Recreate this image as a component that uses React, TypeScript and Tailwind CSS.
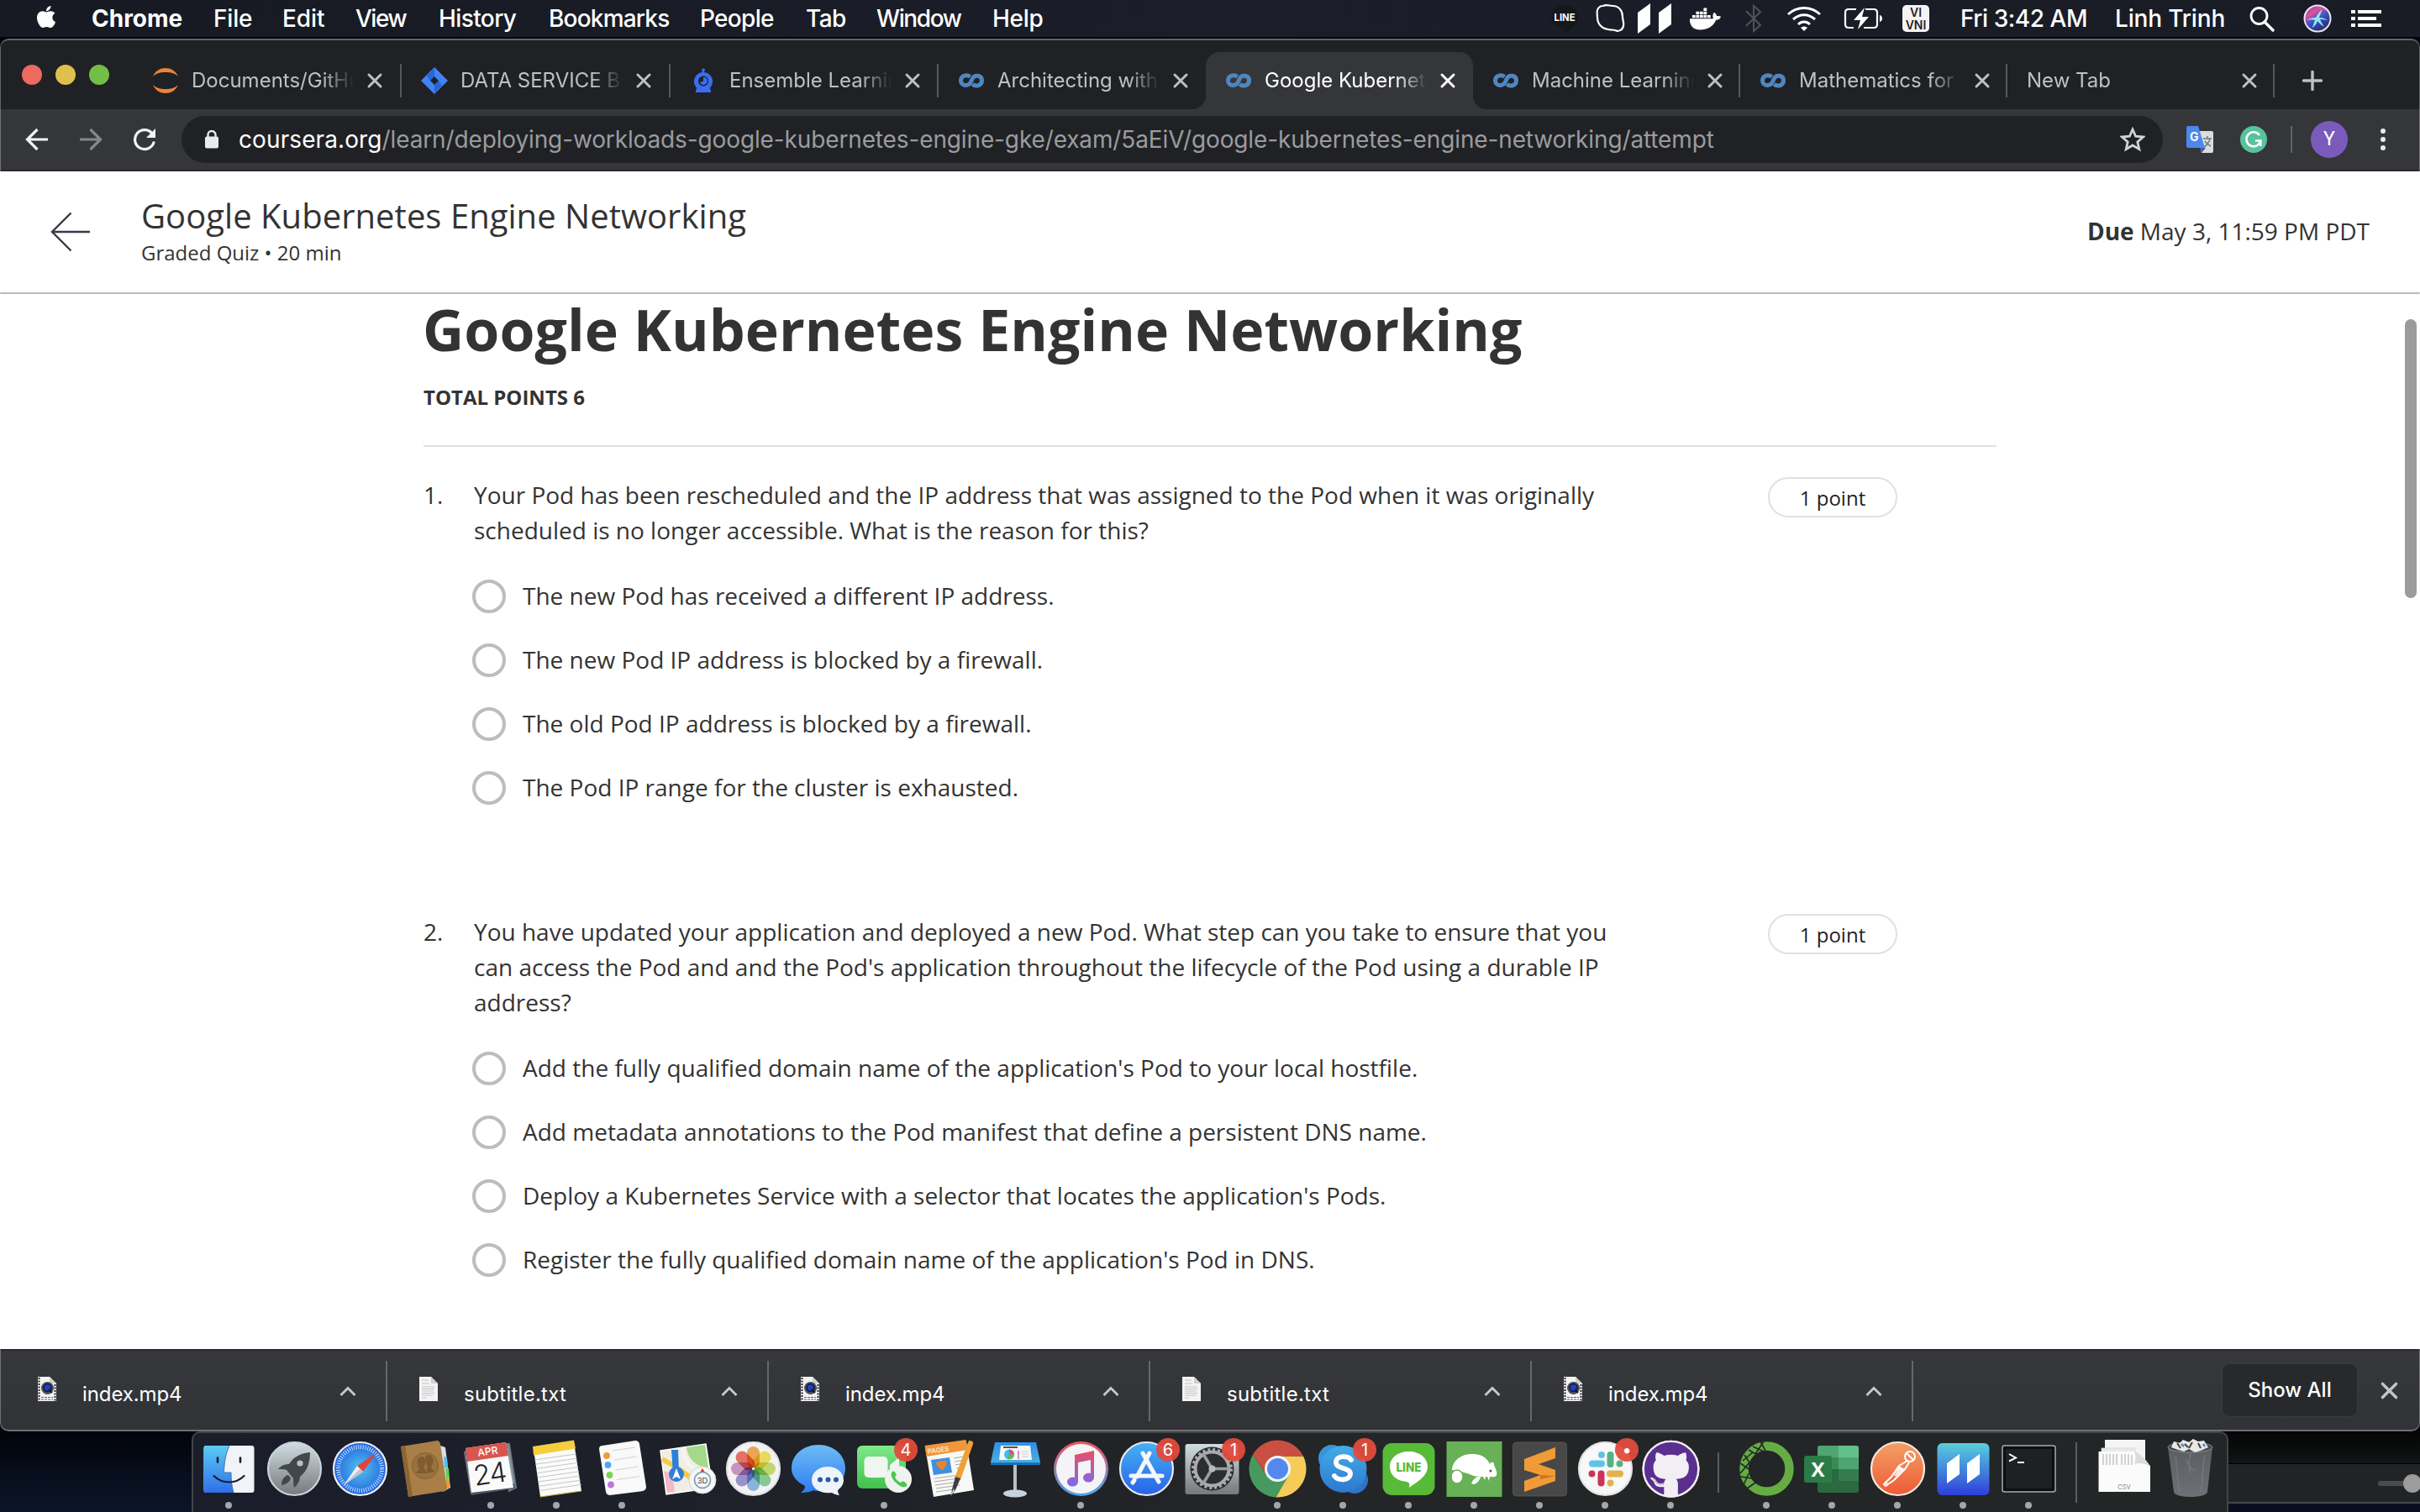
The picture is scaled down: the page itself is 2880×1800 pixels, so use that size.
import React from "react";
import { FaApple, FaDocker, FaGithub } from "react-icons/fa";

/* ---------- Menu bar ---------- */

const MENUS = [
  { label: "File", cls: "w-[82px] tracking-[-0.2px]" },
  { label: "Edit", cls: "w-[87px] tracking-[-0.1px]" },
  { label: "View", cls: "w-[99px] tracking-[-1.5px]" },
  { label: "History", cls: "w-[131px] tracking-[-0.6px]" },
  { label: "Bookmarks", cls: "w-[180px] tracking-[-0.8px]" },
  { label: "People", cls: "w-[126px] tracking-[-0.7px]" },
  { label: "Tab", cls: "w-[84px] tracking-[-0.6px]" },
  { label: "Window", cls: "w-[138px] tracking-[-1.4px]" },
  { label: "Help", cls: "tracking-[-0.3px]" },
];

function MenuBar() {
  return (
    <div className="flex h-[44px] shrink-0 items-center bg-linear-to-r from-[#171a22] via-[#1b1d29] to-[#191c24] text-[28px] font-medium leading-[44px] text-white">
      <FaApple className="-mt-[4px] ml-[40px] size-[30px]" />
      <div className="ml-[39px] w-[145px] font-bold">Chrome</div>
      {MENUS.map((m) => (
        <div key={m.label} className={m.cls}>
          {m.label}
        </div>
      ))}
      <div className="ml-auto flex h-full items-center">
        <svg className="h-[40px] w-[36px]" viewBox="0 0 36 40">
          <path d="M18 4c9 0 16 6 16 14 0 9-9 16-16 21 1-5-1-7-4-8C6 29 2 24 2 18 2 10 9 4 18 4z" fill="#161718" />
          <text x="18" y="22.500" textAnchor="middle" fontSize="12" fontWeight="700" fill="#fff" fontFamily="Inter" textLength="25" lengthAdjust="spacingAndGlyphs">
            LINE
          </text>
        </svg>
        <svg className="ml-[18px] h-[36px] w-[36px]" viewBox="0 0 36 36" fill="none" stroke="#fff" strokeWidth="2.2">
          <path d="M10 3c4-2 7 0 11 0 8 0 12 6 12 13 0 4 2 7 1 11-1 5-6 7-10 5-3-1-5 0-8-1C8 30 3 24 3 17c0-3-1-6 0-9 1-3 4-5 7-5z" />
        </svg>
        <svg className="ml-[15px] h-[38px] w-[40px]" viewBox="0 0 40 38" fill="#fff">
          <path d="M0 12 15 1v25L0 37zM25 12 40 1v25L25 37z" />
        </svg>
        <FaDocker className="ml-[22px] size-[37px]" />
        <svg className="ml-[29px] h-[36px] w-[20px]" viewBox="0 0 20 36" fill="none" stroke="#4f5259" strokeWidth="2">
          <path d="M1 9 18 26 10 33V3l8 7L1 27" />
        </svg>
        <svg className="ml-[29px] h-[32px] w-[42px]" viewBox="0 0 42 32" fill="none" stroke="#fff" strokeWidth="3">
          <path d="M2 11C13 1 29 1 40 11M8 17c8-7 18-7 26 0M14 23c4-4 10-4 14 0" />
          <path d="M17 27c3-2 5-2 8 0l-4 4z" fill="#fff" stroke="none" />
        </svg>
        <svg className="ml-[26px] h-[28px] w-[48px]" viewBox="0 0 48 28" fill="none" stroke="#fff" strokeWidth="2.2">
          <path d="M15 3H6c-3 0-4 1-4 4v14c0 3 1 4 4 4h6M26 3h10c3 0 4 1 4 4v14c0 3-1 4-4 4H24" />
          <path d="M25 1 12 16h8l-3 11 13-15h-8z" fill="#fff" stroke="none" />
          <path d="M43 10c4 1 4 7 0 8z" fill="#fff" stroke="none" />
        </svg>
        <div className="ml-[22px] flex h-[32px] w-[32px] flex-col items-center justify-center rounded-[5px] bg-[#f4f4f4] text-[14px] font-semibold leading-[15px] text-[#22242c]">
          <span>VI</span>
          <span>VNI</span>
        </div>
        <div className="ml-[37px] w-[154px] whitespace-nowrap tracking-[-0.45px]">Fri 3:42 AM</div>
        <div className="ml-[30px] w-[134px] whitespace-nowrap tracking-[-0.15px]">Linh Trinh</div>
        <svg className="ml-[26px] h-[32px] w-[30px]" viewBox="0 0 30 32" fill="none" stroke="#fff" strokeWidth="2.8">
          <circle cx="11.500" cy="13" r="9.500" />
          <path d="m18 20 10 10" strokeWidth="3.400" strokeLinecap="round" />
        </svg>
        <svg className="ml-[34px] size-[34px]" viewBox="0 0 34 34">
          <defs>
            <linearGradient id="siri" x1="0" y1="0" x2="0.600" y2="1">
              <stop offset="0" stopColor="#6a4bb0" />
              <stop offset="0.350" stopColor="#e0519c" />
              <stop offset="0.600" stopColor="#3a55c8" />
              <stop offset="1" stopColor="#2b2c6c" />
            </linearGradient>
          </defs>
          <circle cx="17" cy="17" r="15.500" fill="url(#siri)" stroke="#e6e6ee" strokeWidth="2" />
          <path d="M4 19c5-3 8-3 11-3 2-4 4-7 8-10-2 4-3 7-4 10 4 0 7 1 10 3-4-1-7-1-9-1 1 3 3 6 5 9-4-2-6-5-8-7-1 3-3 6-6 8 1-4 2-6 3-9-3-1-6-1-10 0z" fill="#8fe6f2" />
        </svg>
        <svg className="ml-[23px] mr-[46px] h-[24px] w-[36px]" viewBox="0 0 36 24" fill="#fff">
          <path d="M0 2h5v4H0zM8 2h28v4H8zM0 10h5v4H0zM8 10h22v4H8zM0 18h5v4H0zM8 18h28v4H8z" />
        </svg>
      </div>
    </div>
  );
}

/* ---------- Browser chrome ---------- */

function JupyterIcon() {
  return (
    <svg viewBox="0 0 32 32" className="size-[32px]" fill="#e8833a">
      <path d="M1 11C4 4 10 1 16 1s12 3 15 10C27 7 22 6 16 6S5 7 1 11zM1 21c3 7 9 10 15 10s12-3 15-10c-4 4-9 5-15 5S5 25 1 21z" />
    </svg>
  );
}

function JiraIcon() {
  return (
    <svg viewBox="0 0 32 32" className="size-[32px]">
      <path d="M16 0 32 16 16 32 0 16z" fill="#3f84f6" />
      <path d="M16 1v10l-5 5-4-6zM16 31V21l5-5 4 6z" fill="#2864d6" />
      <path d="m16 11 5 5-5 5-5-5z" fill="#202124" />
    </svg>
  );
}

function RobotIcon() {
  return (
    <svg viewBox="0 0 32 32" className="size-[32px]">
      <path d="M15 4h2v5h-2zM7 29l2-8h14l2 8z" fill="#3a6df0" />
      <circle cx="16" cy="3.500" r="2" fill="#3a6df0" />
      <circle cx="16" cy="17" r="11" fill="#3a6df0" />
      <circle cx="16" cy="16.500" r="6" fill="#202124" />
      <path d="M16 12a4.500 4.500 0 1 1-4 6l4-1.500z" fill="#3a6df0" />
      <path d="M7 27h18v3H7z" fill="#3a6df0" />
    </svg>
  );
}

function CourseraIcon() {
  return (
    <svg viewBox="0 0 32 32" className="size-[32px]" fill="none" stroke="#4f86c0" strokeWidth="5">
      <path d="M14.500 11.500C11 8.500 3.500 9.500 3.500 16c0 6.500 9 7.500 12 1.500l1.500-3.500c3-6 11.500-4.500 11.500 2 0 6.500-8 7.500-11 4" />
    </svg>
  );
}

const TABS = [
  { title: "Documents/GitHub", icon: <JupyterIcon />, w: "w-[320px]", sep: true, active: false },
  { title: "DATA SERVICE BO", icon: <JiraIcon />, w: "w-[320px]", sep: true, active: false },
  { title: "Ensemble Learning", icon: <RobotIcon />, w: "w-[319px]", sep: true, active: false },
  { title: "Architecting with", icon: <CourseraIcon />, w: "w-[318px]", sep: false, active: false },
  { title: "Google Kubernetes", icon: <CourseraIcon />, w: "w-[318px]", sep: false, active: true },
  { title: "Machine Learning", icon: <CourseraIcon />, w: "w-[318px]", sep: true, active: false },
  { title: "Mathematics for", icon: <CourseraIcon />, w: "w-[318px]", sep: true, active: false },
  { title: "New Tab", icon: null, w: "w-[318px]", sep: true, active: false },
];

function CloseX({ className }: { className: string }) {
  return (
    <svg viewBox="0 0 20 20" className={className} fill="none" stroke="currentColor" strokeWidth="3" strokeLinecap="round">
      <path d="m3 3 14 14M17 3 3 17" />
    </svg>
  );
}

function TabStrip() {
  return (
    <div className="flex h-[82px] items-end bg-[#202124]">
      <div className="mb-[29px] ml-[26px] flex w-[132px] gap-[16px]">
        <span className="size-[24px] rounded-full bg-[#ed6a5e]" />
        <span className="size-[24px] rounded-full bg-[#e0c04c]" />
        <span className="size-[24px] rounded-full bg-[#72be47]" />
      </div>
      {TABS.map((t) => (
        <div
          key={t.title}
          className={`relative flex h-[68px] items-center ${t.w} ${t.active ? "rounded-t-[16px] bg-[#35363a] text-white" : "text-[#bdc0c4]"}`}
        >
          {t.active && (
            <>
              <svg className="absolute -left-[16px] bottom-0 size-[16px]" viewBox="0 0 16 16">
                <path d="M0 16c9 0 16-7 16-16v16z" fill="#35363a" />
              </svg>
              <svg className="absolute -right-[16px] bottom-0 size-[16px]" viewBox="0 0 16 16">
                <path d="M16 16C7 16 0 9 0 0v16z" fill="#35363a" />
              </svg>
            </>
          )}
          {t.icon && <div className="ml-[23px] mr-[15px]">{t.icon}</div>}
          <div
            className={`overflow-hidden whitespace-nowrap text-[24px] leading-[32px] [mask-image:linear-gradient(to_right,black_80%,transparent_99%)] ${t.icon ? "w-[195px]" : "ml-[23px] w-[242px]"}`}
          >
            {t.title}
          </div>
          <CloseX className={`ml-[13px] size-[20px] ${t.active ? "text-white" : "text-[#bdc0c4]"}`} />
          {t.sep && <span className="ml-auto h-[40px] w-[2px] bg-[#56585c]" />}
        </div>
      ))}
      <svg viewBox="0 0 24 24" className="mb-[22px] ml-[33px] size-[24px]" stroke="#bdc0c4" strokeWidth="3.400" strokeLinecap="round">
        <path d="M12 1.500v21M1.500 12h21" />
      </svg>
    </div>
  );
}

function Toolbar() {
  return (
    <div className="flex h-[74px] items-center border-b-2 border-[#29292d] bg-[#35363a]">
      <svg viewBox="0 0 28 28" className="ml-[30px] size-[28px]" fill="none" stroke="#f1f3f4" strokeWidth="3.200">
        <path d="M27 14H3M14.500 2 2.500 14l12 12" />
      </svg>
      <svg viewBox="0 0 28 28" className="ml-[36px] size-[28px]" fill="none" stroke="#85878a" strokeWidth="3.200">
        <path d="M1 14h24M13.500 2l12 12-12 12" />
      </svg>
      <svg viewBox="0 0 28 28" className="ml-[36px] size-[28px]" fill="none" stroke="#f1f3f4" strokeWidth="3.200">
        <path d="M23.500 7.500A11.500 11.500 0 1 0 25.300 16.500" />
        <path d="M27 1v11H16z" fill="#f1f3f4" stroke="none" />
      </svg>
      <div className="ml-[30px] flex h-[56px] w-[2358px] items-center rounded-full bg-[#202124]">
        <svg viewBox="0 0 16 22" className="ml-[28px] h-[22px] w-[16px]">
          <path d="M3.500 9V5.500a4.500 4.500 0 0 1 9 0V9" fill="none" stroke="#e8eaed" strokeWidth="2.400" />
          <rect y="7.500" width="16" height="14" rx="2" fill="#e8eaed" />
        </svg>
        <div className="ml-[24px] whitespace-nowrap text-[28px] leading-[40px] tracking-[-0.13px] text-[#9a9c9f]">
          <span className="tracking-[0.1px] text-white">coursera.org</span>
          /learn/deploying-workloads-google-kubernetes-engine-gke/exam/5aEiV/google-kubernetes-engine-networking/attempt
        </div>
        <svg viewBox="0 0 30 30" className="ml-auto mr-[21px] size-[30px]" fill="none" stroke="#d0d2d5" strokeWidth="2.800">
          <path d="m15 3 3.600 8.200 8.900.8-6.700 5.900 2 8.700L15 22l-7.800 4.600 2-8.700L2.500 12l8.900-.8z" />
        </svg>
      </div>
      <svg viewBox="0 0 32 32" className="ml-[28px] size-[32px]">
        <path d="M12 6h18a2 2 0 0 1 2 2v22a2 2 0 0 1-2 2H18z" fill="#dcdcdc" />
        <path d="M17 26h6l-5 6z" fill="#3a52c4" />
        <path d="M2 0h12l8 26H2a2 2 0 0 1-2-2V2a2 2 0 0 1 2-2z" fill="#4d88ee" />
        <path d="M20 15h10M25 12v3M28 15c-1 5-4 8-7 10M22 18c2 3 5 5 7 6" stroke="#6b7a80" strokeWidth="1.500" fill="none" />
        <text x="4" y="18" fontSize="14" fontWeight="700" fill="#fff" fontFamily="Inter">
          G
        </text>
      </svg>
      <svg viewBox="0 0 32 32" className="ml-[32px] size-[32px]" fill="none">
        <circle cx="16" cy="16" r="16" fill="#58c39c" />
        <path d="M23 11a8.500 8.500 0 1 0 1.300 6.500H18M24.300 17.500V24" stroke="#fff" strokeWidth="2.600" />
      </svg>
      <span className="ml-[28px] h-[32px] w-[2px] bg-[#5f6165]" />
      <span className="ml-[22px] flex size-[44px] items-center justify-center rounded-full bg-[#7a5bbb] font-[Roboto] text-[23px] text-white">
        Y
      </span>
      <span className="ml-[39px] flex flex-col gap-[4px]">
        <i className="size-[6px] rounded-full bg-[#e8eaed]" />
        <i className="size-[6px] rounded-full bg-[#e8eaed]" />
        <i className="size-[6px] rounded-full bg-[#e8eaed]" />
      </span>
    </div>
  );
}

/* ---------- Quiz page ---------- */

const QUESTIONS = [
  {
    n: "1.",
    lines: [
      "Your Pod has been rescheduled and the IP address that was assigned to the Pod when it was originally",
      "scheduled is no longer accessible. What is the reason for this?",
    ],
    options: [
      "The new Pod has received a different IP address.",
      "The new Pod IP address is blocked by a firewall.",
      "The old Pod IP address is blocked by a firewall.",
      "The Pod IP range for the cluster is exhausted.",
    ],
  },
  {
    n: "2.",
    lines: [
      "You have updated your application and deployed a new Pod. What step can you take to ensure that you",
      "can access the Pod and and the Pod's application throughout the lifecycle of the Pod using a durable IP",
      "address?",
    ],
    options: [
      "Add the fully qualified domain name of the application's Pod to your local hostfile.",
      "Add metadata annotations to the Pod manifest that define a persistent DNS name.",
      "Deploy a Kubernetes Service with a selector that locates the application's Pods.",
      "Register the fully qualified domain name of the application's Pod in DNS.",
    ],
  },
];

function QuizPage() {
  return (
    <div className="flex h-[1402px] flex-col bg-white font-['Open_Sans',sans-serif] text-[#333]">
      <header className="flex h-[146px] shrink-0 items-center border-b-2 border-[#bbb] pr-[60px]">
        <svg viewBox="0 0 48 48" className="ml-[60px] size-[48px]" fill="none" stroke="#373a44" strokeWidth="2.400">
          <path d="M47 24H2M24.500 1.500 2 24l22.500 22.500" />
        </svg>
        <div className="ml-[60px] mt-[1px]">
          <div className="text-[40px] leading-[48px] tracking-[0.03px]">Google Kubernetes Engine Networking</div>
          <div className="text-[24px] leading-[40px]">Graded Quiz • 20 min</div>
        </div>
        <div className="ml-auto -mt-[2px] text-[28px] leading-[42px]">
          <b>Due</b> May 3, 11:59 PM PDT
        </div>
      </header>
      <main className="relative min-h-0 flex-1 overflow-hidden">
        <div className="ml-[504px] w-[1872px]">
          <h1 className="-ml-[1px] text-[68px] font-bold leading-[84px] tracking-[0.04px]">
            Google Kubernetes Engine Networking
          </h1>
          <div className="mt-[21px] border-b-2 border-[#e1e1e1] pb-[39px] text-[24px] font-bold leading-[36px]">
            TOTAL POINTS 6
          </div>
          <div className="mt-[36px] flex flex-col gap-[130px]">
            {QUESTIONS.map((q) => (
              <section key={q.n} className="grid grid-cols-[60px_1540px_154px] text-[28px] leading-[42px]">
                <div>{q.n}</div>
                <div>
                  {q.lines.map((l) => (
                    <div key={l} className="whitespace-nowrap">
                      {l}
                    </div>
                  ))}
                  <div className="mt-[38px] flex flex-col gap-[36px]">
                    {q.options.map((o) => (
                      <label key={o} className="flex h-[40px] items-center">
                        <span className="-ml-[2px] size-[40px] rounded-full border-4 border-[#bdbdbd]" />
                        <span className="-mt-[2px] ml-[20px]">{o}</span>
                      </label>
                    ))}
                  </div>
                </div>
                <div className="flex h-[48px] items-center justify-center rounded-full border-2 border-[#e1e1e1] pt-[2px] text-[24px] text-[#1f1f1f]">
                  1 point
                </div>
              </section>
            ))}
          </div>
        </div>
        <div className="absolute right-[4px] top-[30px] h-[332px] w-[14px] rounded-full bg-[#9b9b9b]" />
      </main>
    </div>
  );
}

/* ---------- Downloads shelf ---------- */

function FileIcon({ video }: { video: boolean }) {
  return (
    <svg viewBox="0 0 24 30" className="h-[30px] w-[24px]">
      <path d="M1 0h14l8 8v21H1z" fill="#f3f3f3" />
      <path d="M15 0v8h8z" fill="#cfcfcf" />
      {video ? (
        <>
          <path d="M2.500 1v28M21.500 9v20" stroke="#222" strokeWidth="2" strokeDasharray="2 1.500" />
          <circle cx="12.500" cy="13.500" r="7.500" fill="#4a4f5c" />
          <circle cx="12.500" cy="13" r="4.500" fill="#1c3fd0" stroke="#15181f" strokeWidth="1.500" />
          <path d="m14 15 4 4" stroke="#15181f" strokeWidth="2" />
          <path d="M5 24.500h14M5 27h14" stroke="#666" strokeWidth="1" strokeDasharray="3 1" />
        </>
      ) : (
        <path d="M4 4h8M4 8h9M4 12h15M4 14.500h15M4 17h14M4 19.500h15M4 22h13M4 25h5" stroke="#c4c4c4" strokeWidth="1" />
      )}
    </svg>
  );
}

function DownloadShelf() {
  const files = ["index.mp4", "subtitle.txt", "index.mp4", "subtitle.txt", "index.mp4"];
  return (
    <div className="flex h-[98px] items-center border-t-2 border-[#29292c] bg-linear-to-b from-[#37383c] to-[#313236] pl-[7px] text-[24px] text-white">
      {files.map((f, i) => (
        <div key={i} className="flex h-[72px] w-[454px] items-center">
          <div className="-mt-[5px] ml-[37px]">
            <FileIcon video={f === "index.mp4"} />
          </div>
          <div className={`mt-[8px] ml-[30px] leading-[32px] ${f === "index.mp4" ? "tracking-[-0.1px]" : "tracking-[0.25px]"}`}>{f}</div>
          <svg viewBox="0 0 20 12" className="ml-auto mr-[35px] h-[12px] w-[20px]" fill="none" stroke="#c9cacc" strokeWidth="2.800">
            <path d="m1.500 11 8.500-8.500 8.500 8.500" />
          </svg>
          <span className="h-[72px] w-[2px] bg-[#66676a]" />
        </div>
      ))}
      <div className="-mt-[3px] ml-[367px] flex h-[64px] w-[162px] items-center justify-center rounded-[9px] border border-[#3b3c40] bg-[#28292c] font-medium">
        Show All
      </div>
      <CloseX className="-mt-[2px] ml-[26px] size-[23px] text-[#c3c4c6]" />
    </div>
  );
}

/* ---------- Dock ---------- */

/* Every dock icon is drawn on a 78 × 96 slot. */
const Disc = ({ fill, ring = "#e4e6e8" }: { fill: string; ring?: string }) => (
  <circle cx="39.500" cy="44.500" r="31.500" fill={fill} stroke={ring} strokeWidth="2.200" />
);

const PETALS = ["#f3a03c", "#f2e14a", "#c3dc5c", "#7cc98a", "#7ab4e4", "#8f86cc", "#c98bc0", "#e9604f"];

const finder = (
  <>
    <rect x="9.500" y="17" width="60" height="56" rx="3" fill="#f0f3f7" />
    <path d="M12.500 17H40c-5 11-6 21-6.500 32H42c0 9 1 17 3 24H12.500a3 3 0 0 1-3-3V20a3 3 0 0 1 3-3z" fill="url(#gFinder)" />
    <path d="M40 17c-5 11-6 21-6.500 32H42c0 9 1 17 3 24" fill="none" stroke="#37628f" strokeWidth="0.800" />
    <path d="M26 31.500v5M53 31.500v5" stroke="#15202c" strokeWidth="2.600" strokeLinecap="round" />
    <path d="M21.500 53c10 10 26 10 36 0" fill="none" stroke="#15202c" strokeWidth="2.200" strokeLinecap="round" />
  </>
);

const launchpad = (
  <>
    <Disc fill="url(#gGrey)" ring="#c9d4da" />
    <path d="M58 25c-12 1-20 6-25 14-5 0-10 2-13 6 4 0 8 0 10 1l8 10c0 3 0 7 1 11 4-3 7-8 7-13 8-6 12-16 12-29z" fill="#42474b" />
    <path d="M32 52c-5 1-8 6-8 12 6-1 10-4 11-8z" fill="#42474b" />
    <circle cx="46" cy="38" r="3.600" fill="#b9c1c5" />
  </>
);

const safari = (
  <>
    <Disc fill="url(#gBlue)" ring="#eceef0" />
    <circle cx="39.500" cy="44.500" r="26" fill="none" stroke="#cfe8ff" strokeWidth="5" strokeDasharray="0.900 1.820" />
    <path d="m60 25-24 16 7 7z" fill="#e5423a" />
    <path d="M20 64 36 41l7 7z" fill="#eef0f2" />
    <path d="M20 64 43 48l-3.500-3.500z" fill="#bfc5ca" />
  </>
);

const contacts = (
  <g>
    <path d="m54 16 9 3 6 48-9 5z" fill="#d8dde0" />
    <path d="m61 30 4 1 1 12-4 1z" fill="#55bdf0" />
    <path d="m63 44 4 0 1 12-4 1z" fill="#63cf57" />
    <path d="m64 57 4 0 0 10-4 2z" fill="#f19a30" />
    <path d="m10 18 43-7q3 0 4 4l8 52q0 3-3 4l-43 7z" fill="#a97f47" />
    <path d="m10 18 5-1 9 60-5 1z" fill="#8b6533" />
    <circle cx="39" cy="41" r="15.500" fill="#9a7140" stroke="#86602f" strokeWidth="1" />
    <path d="M28 50c2-4 4-3 4-6-5-6-2-15 4-14 4 1 4 8 1 13 1 2 3 3 3 7M50 48c-2-4-4-3-4-6 5-6 2-15-4-14-4 1-3 9 0 14 0 2-2 4-1 8" fill="#7f5b2e" />
  </g>
);

const calendar = (
  <>
    <path d="m58 15 3 0 8 52-8 4zM8 24l8 50 2 1" fill="#8897a3" stroke="#6d7a85" strokeWidth="2" />
    <path d="m16 76 52-8-1-6-52 10z" fill="#4c555d" />
    <path d="m9 20 48-7 9 54-50 6z" fill="#fafafa" />
    <path d="m9 20 48-7 3 16-49 7z" fill="#d9554e" />
    <text transform="rotate(-8 36 28)" x="36" y="28" textAnchor="middle" fontSize="12" fontWeight="500" fill="#fff" fontFamily="Inter">
      APR
    </text>
    <text transform="rotate(-8 39 59)" x="39" y="62" textAnchor="middle" fontSize="33" fontWeight="300" letterSpacing="-1" fill="#222" fontFamily="Inter">
      24
    </text>
  </>
);

const notes = (
  <>
    <path d="m12 21 48-8 9 58-49 7z" fill="#fbfbf9" />
    <path d="m11 18 49-7.500 2 10-50 8z" fill="#f5cd3f" />
    {[0, 1, 2, 3, 4, 5, 6, 7].map((i) => (
      <path key={i} d={`m${13.5 + i * 0.9} ${34 + i * 5.2} 49-7`} stroke="#c3c6ca" strokeWidth="1" />
    ))}
    <path d="m20 78 49-7" stroke="#c9a93c" strokeWidth="1.200" />
  </>
);

const REMINDER_DOTS = [
  [21, 29, "#f19a38"],
  [22.5, 40, "#4aa9f5"],
  [24.5, 52, "#7bd44d"],
  [26, 63.5, "#bc77dd"],
] as const;

const reminders = (
  <>
    <path d="m16 17 39-6q4 0 5 4l8 51q0 4-4 5l-39 5q-4 0-5-4l-8-51q0-4 4-4z" fill="#f9f9fa" />
    {REMINDER_DOTS.map(([x, y, c]) => (
      <g key={c}>
        <circle cx={x} cy={y} r="3.900" fill={c} />
        <path d={`m${x + 7} ${y - 5} 27-4`} stroke="#cfd2d6" strokeWidth="1" transform="translate(0 -1)" />
      </g>
    ))}
  </>
);

const maps = (
  <>
    <path d="m7 23 54-8 8 52-55 8z" fill="#f1ede3" stroke="#fff" strokeWidth="1.500" />
    <path d="m38 19 22-3 4 28c-15-3-24-10-26-25z" fill="#a5d98a" />
    <path d="M33 19c2 20 14 29 33 32" fill="none" stroke="#f6f4ee" strokeWidth="5" />
    <path d="m9 33 16 9 22 16 4 10" fill="none" stroke="#f6c94a" strokeWidth="6" />
    <path d="m11 47 10 3 3 22-9 1z" fill="#f1b8c9" />
    <path d="M20 22h8l1 28h-7z" fill="#2c7fdf" />
    <circle cx="26" cy="51" r="9" fill="#2f7ed8" />
    <path d="m26 44 5 13-5-3-5 3z" fill="#fff" />
    <circle cx="57" cy="58" r="16" fill="#f5f6f7" stroke="#cfd3d6" strokeWidth="1" />
    <circle cx="57" cy="58" r="9.500" fill="none" stroke="#7895ac" strokeWidth="1.600" />
    <path d="m57 44 2.500 4h-5z" fill="#e0392c" />
    <text x="57" y="61.500" textAnchor="middle" fontSize="9.500" fill="#444" fontFamily="Inter">
      3D
    </text>
  </>
);

const photos = (
  <>
    <Disc fill="#f3f3f3" ring="#dfe1e4" />
    {PETALS.map((c, i) => (
      <rect
        key={c}
        x="32"
        y="18"
        width="15"
        height="26"
        rx="7.500"
        fill={c}
        fillOpacity="0.850"
        className="mix-blend-multiply"
        transform={`rotate(${i * 45} 39.5 44.5)`}
      />
    ))}
    <circle cx="39.500" cy="44.500" r="1.500" fill="#fff" />
  </>
);

const messages = (
  <>
    <path d="M39 16c18 0 32 12 32 28S57 71 39 71c-2 0-4 0-6-1-3 2-7 3-15 3 4-3 5-5 5-8C13 60 7 53 7 44c0-16 14-28 32-28z" fill="url(#gMsg)" />
    <path d="M50 42c11 0 19 7 19 16 0 5-3 9-7 12 0 3 1 4 2 6-4 0-7-2-9-3-15 2-24-6-24-15s8-16 19-16z" fill="#eef4fb" />
    <g fill="#285a9e">
      <circle cx="41" cy="57.500" r="3" />
      <circle cx="50.500" cy="57.500" r="3" />
      <circle cx="60" cy="57.500" r="3" />
    </g>
  </>
);

const facetime = (
  <>
    <rect x="7" y="17" width="58" height="51" rx="6" fill="url(#gGreen)" />
    <rect x="15.500" y="30" width="28" height="25" rx="5" fill="#f1f6f1" />
    <path d="m46 40 11-9v24l-11-8z" fill="#f1f6f1" />
    <circle cx="56" cy="57" r="16" fill="#eef3ee" />
    <path d="M49 48c-3 3-1 8 4 13 5 5 10 7 13 4 1-2 0-3-3-5-2-1-3 0-4 1-3-1-6-4-7-7 2-1 2-2 1-4-1-2-2-3-4-2z" fill="#4fc553" />
  </>
);

const pages = (
  <>
    <path d="m10 19 49-7 9 58-48 8z" fill="#f8f8f6" />
    <path d="m9.500 17 49-7 2 12-49 8z" fill="#f0973a" />
    <text transform="rotate(-8 15 27)" x="13" y="26.500" fontSize="8" fontWeight="600" fill="#fdebd2" fontFamily="Inter">
      PAGES
    </text>
    <path d="m17 34 22-3 3 18-22 3z" fill="#3f8fe0" />
    <path d="M23 37c4-2 11-3 13-1-1 5-3 8-5 10-4-1-7-5-8-9z" fill="#ef8228" />
    <path d="m44 32 12-2m-11 6 12-2m-11 6 10-2m-9 6 8-1M21 56l30-4M21 60l28-4M22 64l28-4M23 68l28-4M23 72l22-3" stroke="#a9a9a9" strokeWidth="1.100" />
    <path d="M62 11c3 0 6 1 5 4L52 58l-7-2z" fill="#f19f38" />
    <path d="m46 54 6 2-6 14-5 7 1-8z" fill="#3d3d3f" />
    <path d="m44 68-4 9 5-6z" fill="#d9dcdf" />
  </>
);

const keynote = (
  <>
    <path d="M37 38h4v36h-4z" fill="#b9c0c7" />
    <ellipse cx="39" cy="74" rx="14" ry="4.500" fill="#c9d3dd" />
    <path d="M15 13h49l5 24H10z" fill="url(#gKey)" />
    <path d="M10 37h59v3H10z" fill="#1673b8" />
    <path d="M22 17h35l2 17H20z" fill="#f6f7f8" />
    <path d="M25 19h17" stroke="#555" strokeWidth="2" />
    <circle cx="32" cy="27.500" r="6" fill="#49b9ea" />
    <path d="M32 27.500v-6a6 6 0 0 1 6 6z" fill="#e84a7c" />
    <path d="M32 27.500h6a6 6 0 0 1-9 5z" fill="#58c04c" />
    <path d="M43 23v10" stroke="#e06b9a" strokeWidth="1.500" />
    <path d="M47 24h8M47 27h8M47 30h8" stroke="#c9ccd0" strokeWidth="1" />
  </>
);

const itunes = (
  <>
    <circle cx="39.500" cy="44.500" r="32.500" fill="url(#gRing)" />
    <circle cx="39.500" cy="44.500" r="29.500" fill="#f4f3f6" />
    <path d="M32 28 55 23v32a6.500 5.500 0 1 1-4-5V34l-15 3v23a6.500 5.500 0 1 1-4-5z" fill="url(#gNote)" />
  </>
);

const appstore = (
  <>
    <Disc fill="url(#gApp)" ring="#e8ebef" />
    <path d="m43 26-15 28M35 26l19 34M21 53h37M25 58l-2 3" stroke="#f4f7fb" strokeWidth="5" strokeLinecap="round" fill="none" />
  </>
);

const sysprefs = (
  <>
    <rect x="7.500" y="15" width="64" height="60" rx="3" fill="url(#gGrey)" />
    <circle cx="39.500" cy="44.500" r="26" fill="#2b2d30" />
    <circle cx="39.500" cy="44.500" r="20" fill="none" stroke="#a9abad" strokeWidth="4" />
    <circle cx="39.500" cy="44.500" r="22.500" fill="none" stroke="#a9abad" strokeWidth="4" strokeDasharray="3 2.890" />
    <path d="M39.500 44.500 29 27M39.500 44.500 29 62M39.500 44.500H60" stroke="#9b9da0" strokeWidth="3.600" />
    <circle cx="39.500" cy="44.500" r="4" fill="#b7b9bb" />
  </>
);

const chrome = (
  <>
    <path d="M10.100 27.500A34 34 0 0 0 37.500 78.500L54 52 39.500 44.500 26 52z" fill="#48995f" />
    <path d="M39.500 29.500H70A34 34 0 0 1 37.500 78.500L53 52z" fill="#f6cb58" />
    <path d="M10.100 27.500A34 34 0 0 1 70 29.500H39.500L26 52z" fill="#c94f43" />
    <circle cx="39.500" cy="44.500" r="15.500" fill="#f2f4f6" />
    <circle cx="39.500" cy="44.500" r="12.500" fill="#5389ee" />
  </>
);

const skype = (
  <>
    <circle cx="26" cy="32" r="16" fill="#3b93d8" />
    <circle cx="53" cy="58" r="16" fill="#2c74c4" />
    <circle cx="39.500" cy="45" r="28" fill="url(#gSky)" />
    <path d="M49 34c-3-5-17-6-18 2-1 10 18 6 17 15-1 8-15 8-19 2" fill="none" stroke="#fff" strokeWidth="5.800" strokeLinecap="round" />
  </>
);

const line = (
  <>
    <rect x="8.500" y="14" width="62" height="62" rx="11" fill="#57bb37" />
    <path d="M39.500 24C53 24 62 32 62 42c0 11-12 18-22 25 1-5 0-6-3-7-12-1-20-8-20-18 0-10 9-18 22.500-18z" fill="#fff" />
    <text x="39.500" y="48" textAnchor="middle" fontSize="14" fontWeight="800" fill="#57bb37" fontFamily="Inter" textLength="30" lengthAdjust="spacingAndGlyphs">
      LINE
    </text>
  </>
);

const mammal = (
  <>
    <rect x="6.500" y="12" width="66" height="66" fill="#68b156" />
    <path d="M13 46c0-11 12-20 25-19 11 0 17 5 20 12 1-3 6-3 5 1 2 5 4 8 3 12-1 3-5 2-8 2l-1 5-2-5h-2l-1 4-2-4c-5-1-8 0-11-1-7-3-18-6-26-7z" fill="#fff" />
    <ellipse cx="19" cy="54" rx="7" ry="8" fill="#fff" stroke="#68b156" strokeWidth="1.500" />
    <path d="M36 62c2-5 6-9 12-9-2 4-4 9-9 10z" fill="#fff" />
    <circle cx="59" cy="47" r="1.600" fill="#4a6b40" />
  </>
);

const sublime = (
  <>
    <rect x="7.500" y="13" width="64" height="64" rx="4" fill="#484848" stroke="#5a5a5a" strokeWidth="0.800" />
    <path d="m21 35 37-14v13L38 41l20 7v13L21 74V61l19-7-19-6z" fill="#f19b36" transform="translate(0 -2)" />
    <path d="m40 52 18 1-18 4z" fill="#c97420" />
  </>
);

const slack = (
  <>
    <Disc fill="#f8f8f8" ring="#e2e2e2" />
    <g strokeWidth="8" strokeLinecap="round" fill="none">
      <path d="M24 38.500h11M35 28h0" stroke="#5fc3e8" />
      <path d="M45.500 28v11M56.500 38.500h0" stroke="#58b184" />
      <path d="M45 50.500h12M45.500 61.500h0" stroke="#e5b14b" />
      <path d="M34.500 50.500v11M23.500 50.500h0" stroke="#cd3358" />
    </g>
  </>
);

const github = (
  <>
    <circle cx="39.500" cy="44.700" r="34" fill="#f1eef4" />
    <FaGithub x={5.5} y={10.5} width={68} height={68} size={68} color="#5a2f8f" />
    <circle cx="39.500" cy="44.700" r="32.800" fill="none" stroke="#f1eef4" strokeWidth="2.400" />
  </>
);

const anaconda = (
  <>
    <circle cx="39.500" cy="44.500" r="27" fill="none" stroke="#65ac42" strokeWidth="10.500" />
    <path d="m32 12 6 11M23 18l13 6M18 22l10 6M13 28l8 12M23 25 11 35M8 38l12 8M19 37 8 50M9 54l13 2M18 50l-6 14M16 68l10-7M36 12 26 27" stroke="#23262a" strokeWidth="1.600" />
  </>
);

const excel = (
  <>
    <rect x="22" y="17" width="49" height="56" rx="3" fill="#2b6a40" />
    <path d="M25 17h22v14H22V20a3 3 0 0 1 3-3z" fill="#4fa56f" />
    <path d="M47 17h21a3 3 0 0 1 3 3v11H47z" fill="#63c088" />
    <path d="M22 31h25v14H22z" fill="#3b8a55" />
    <path d="M47 31h24v14H47z" fill="#4fa56f" />
    <path d="M47 45h24v14H47z" fill="#367b4b" />
    <rect x="6" y="29" width="33" height="32" rx="3" fill="#2b7b47" />
    <text x="22.500" y="53.500" textAnchor="middle" fontSize="24" fontWeight="700" fill="#fff" fontFamily="Open Sans">
      X
    </text>
  </>
);

const postman = (
  <>
    <Disc fill="url(#gPost)" ring="#f4e9e4" />
    <circle cx="54" cy="30" r="6" fill="none" stroke="#fff" strokeWidth="2" />
    <path d="m50 26 8 8M51 35 41 41l-9 13-9 9 2 2 10-7 13-13 5-8M40 42l6 5M24 60l4 4" stroke="#fff" strokeWidth="2" fill="none" />
    <path d="m41 41 7 4-8 9-5-1z" fill="#fff" fillOpacity="0.800" />
  </>
);

const bars = (
  <>
    <rect x="8.500" y="14" width="62" height="62" rx="6" fill="url(#gBars)" />
    <path d="m20 38 15-11v24L20 62zM44 38l15-11v24L44 62z" fill="#fff" />
  </>
);

const terminal = (
  <>
    <rect x="8" y="17" width="63" height="55" rx="2.500" fill="#0d0e0f" stroke="#a9abad" strokeWidth="1.500" />
    <rect x="12" y="21" width="55" height="47" fill="#1f2021" />
    <path d="m16 27 8 4.500-8 4M26 37h8" stroke="#fff" strokeWidth="2" fill="none" />
  </>
);

const csv = (
  <>
    <path d="M16 10h48v30H16z" fill="#f4f4f4" />
    <path d="M12 20h40v20H12z" fill="#e9e9e9" stroke="#d8d8d8" strokeWidth="0.800" />
    <path d="M8.500 24H55c4 7 11 14 15 17v31H8.500z" fill="#fbfbfb" />
    <path d="M14 27v13M18 27v13M22 27v13M26 27v13M30 27v13M36 27v13M40 27v13M44 27v13M48 28v12" stroke="#d2d2d2" strokeWidth="2" />
    <path d="M50 22c3 4 3 12 1 17 6-2 13-1 19 3-3-7-12-15-20-20z" fill="#dcdcdc" />
    <text x="39" y="68.500" textAnchor="middle" fontSize="7.500" fill="#8a8a8a" fontFamily="Inter">
      CSV
    </text>
  </>
);

const trash = (
  <>
    <path d="M13 19h53l-6 53c-1 8-39 8-40 0z" fill="url(#gTrash)" />
    <ellipse cx="39.500" cy="19" rx="26.500" ry="6" fill="#43464a" stroke="#8b8e92" strokeWidth="1" />
    <path d="m17 19 3-7 7 2 4-4 7 3 5-4 6 3 7-1 5 8-9 4-7 2-7-4-6 3-7-2z" fill="#e8e8e6" />
    <path d="m24 14 4 6M42 13l-4 7M33 15l4 4M49 14l3 6" stroke="#4a3d38" strokeWidth="2" />
    <path d="m29 15 3 3M55 15l2 3" stroke="#3f8bd8" strokeWidth="2.500" />
    <path d="M22 30c2 12 2 28 5 42M57 28c-3 12-2 30-5 44M34 34c5 3 4 12 12 13M40 26c-2 10-3 16 0 24" stroke="#7f8286" strokeWidth="1.500" strokeOpacity="0.600" fill="none" />
  </>
);

type DockApp = { id: string; art: React.ReactNode; running?: boolean; badge?: string };

const MAIN_APPS: DockApp[] = [
  { id: "finder", art: finder, running: true },
  { id: "launchpad", art: launchpad },
  { id: "safari", art: safari },
  { id: "contacts", art: contacts },
  { id: "calendar", art: calendar, running: true },
  { id: "notes", art: notes, running: true },
  { id: "reminders", art: reminders, running: true },
  { id: "maps", art: maps },
  { id: "photos", art: photos },
  { id: "messages", art: messages },
  { id: "facetime", art: facetime, running: true, badge: "4" },
  { id: "pages", art: pages },
  { id: "keynote", art: keynote },
  { id: "itunes", art: itunes, running: true },
  { id: "appstore", art: appstore, badge: "6" },
  { id: "sysprefs", art: sysprefs, badge: "1" },
  { id: "chrome", art: chrome, running: true },
  { id: "skype", art: skype, running: true, badge: "1" },
  { id: "line", art: line, running: true },
  { id: "mammal", art: mammal, running: true },
  { id: "sublime", art: sublime, running: true },
  { id: "slack", art: slack, running: true, badge: "•" },
  { id: "github", art: github, running: true },
];

const EXTRA_APPS: DockApp[] = [
  { id: "anaconda", art: anaconda, running: true },
  { id: "excel", art: excel, running: true },
  { id: "postman", art: postman, running: true },
  { id: "bars", art: bars, running: true },
  { id: "terminal", art: terminal, running: true },
];

const FILES: DockApp[] = [
  { id: "csv", art: csv },
  { id: "trash", art: trash },
];

function DockIcon({ app }: { app: DockApp }) {
  return (
    <div className="relative h-[94px] w-[78px] shrink-0">
      <svg viewBox="0 2 78 94" className="isolate h-[94px] w-[78px]">
        {app.art}
        {app.running && <circle cx="39" cy="88" r="4" fill="#a3a6ae" />}
      </svg>
      {app.badge && (
        <span className="absolute -right-[1px] top-[6px] flex size-[28px] items-center justify-center rounded-full bg-[#e24b3c]/95 text-[20px] leading-none text-white">
          {app.badge}
        </span>
      )}
    </div>
  );
}

const GRADIENTS: [string, string, string][] = [
  ["gFinder", "#5accf5", "#2f6fe8"],
  ["gGrey", "#d0dde3", "#77787a"],
  ["gMsg", "#6dbcf5", "#2f7df0"],
  ["gGreen", "#7fe98a", "#3fc14b"],
  ["gKey", "#2f8fe8", "#49aee0"],
  ["gRing", "#f2505e", "#46a5f0"],
  ["gNote", "#ec4f62", "#7a6af0"],
  ["gApp", "#46b1f5", "#2762e8"],
  ["gSky", "#41aee8", "#2f78cf"],
  ["gPost", "#f3a066", "#ee5a35"],
  ["gBars", "#58cfdc", "#2f3edb"],
  ["gTrash", "#5a5d61", "#6d7074"],
];

function Dock() {
  return (
    <div className="flex flex-1 items-start bg-[#050812]">
      <svg className="h-0 w-0" aria-hidden="true">
        <defs>
          {GRADIENTS.map(([id, a, b]) => (
            <linearGradient key={id} id={id} x1="0" y1="0" x2="0" y2="1">
              <stop offset="0" stopColor={a} />
              <stop offset="1" stopColor={b} />
            </linearGradient>
          ))}
          <radialGradient id="gBlue">
            <stop offset="0" stopColor="#52c3ee" />
            <stop offset="1" stopColor="#2465e0" />
          </radialGradient>
        </defs>
      </svg>
      <div className="h-[96px] w-[228px] bg-linear-to-b from-[#02040a] via-[#070d1b] to-[#0b1429]" />
      <div className="flex h-[110px] w-[2424px] rounded-t-[10px] border-2 border-b-0 border-[#424447] bg-linear-to-r from-[#1a1d2a] via-[#232527] via-55% to-[#232626] pl-[3px]">
        {MAIN_APPS.map((a) => (
          <DockIcon key={a.id} app={a} />
        ))}
        <div className="flex h-[94px] w-[36px] shrink-0 items-center justify-center">
          <span className="h-[48px] w-[2px] bg-[#5b5d60]" />
        </div>
        {EXTRA_APPS.map((a) => (
          <DockIcon key={a.id} app={a} />
        ))}
        <div className="flex h-[94px] w-[36px] shrink-0 items-center justify-center">
          <span className="h-[72px] w-[2px] bg-[#5b5d60]" />
        </div>
        {FILES.map((a) => (
          <DockIcon key={a.id} app={a} />
        ))}
      </div>
      <div className="flex flex-1 flex-col">
        <div className="h-[38px] bg-linear-to-b from-[#050505] to-[#121415]" />
        <div className="flex h-[48px] items-center justify-end border-b-2 border-t border-b-[#47484a] border-t-black bg-[#222325]">
          <span className="h-[6px] w-[30px] rounded-l-full bg-[#4a4b4c]" />
          <span className="-mr-[2px] size-[22px] rounded-full bg-[#9c9c9c]" />
        </div>
        <div className="h-[12px] bg-[#0a0f20]" />
      </div>
    </div>
  );
}

export default function App() {
  return (
    <div className="flex h-[1800px] w-[2880px] flex-col overflow-hidden bg-[#02050d] font-[Inter,sans-serif]">
      <MenuBar />
      <div className="relative mt-[2px] shrink-0 overflow-hidden rounded-[10px] bg-[#202124] pt-[2px]">
        <TabStrip />
        <Toolbar />
        <QuizPage />
        <DownloadShelf />
        <div className="pointer-events-none absolute inset-0 rounded-[10px] border-2 border-x border-white/30" />
      </div>
      <Dock />
    </div>
  );
}
